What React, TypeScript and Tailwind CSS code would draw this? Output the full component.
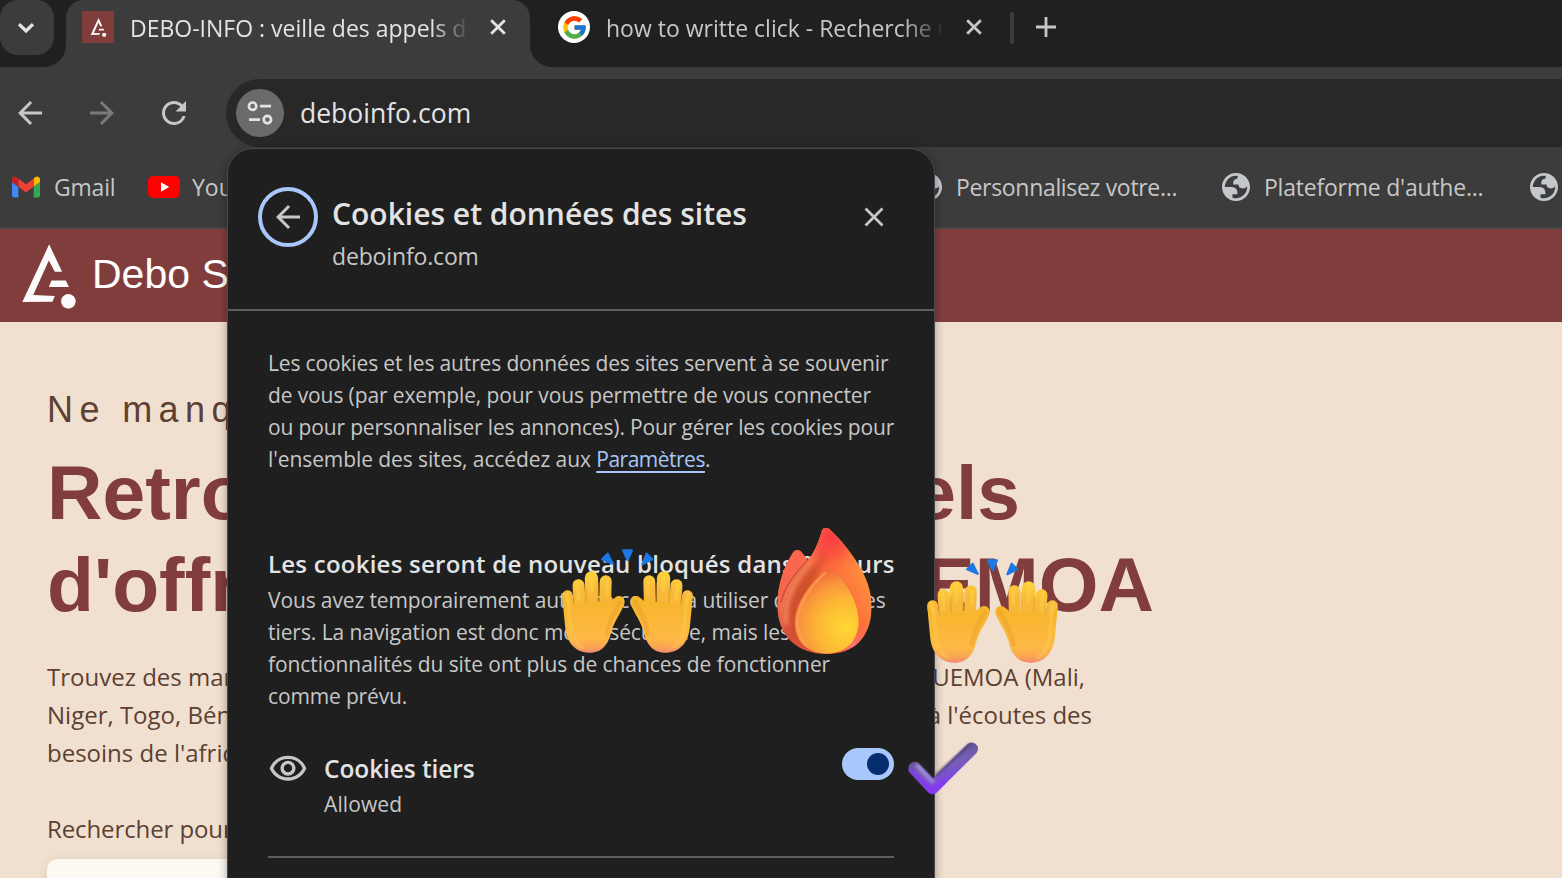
import React from "react";
import { MdArrowBack, MdArrowForward, MdRefresh, MdOutlineVisibility } from "react-icons/md";
import { FcGoogle } from "react-icons/fc";

function Cross({ className }: { className: string }) {
  return (
    <svg viewBox="0 0 16 16" className={className} fill="none" stroke="currentColor">
      <path d="M1.2 1.2 14.8 14.8M14.8 1.2 1.2 14.8" />
    </svg>
  );
}

function DeboLogo({ className }: { className: string }) {
  return (
    <svg viewBox="66 56 163 196" className={className} fill="#fcfafb">
      <path d="M148 57 187 140 165 140 147 106 100 210 165 213 158 230 67 231Z" />
      <path d="M155 166H198L208 186H147Z" />
      <circle cx="206" cy="229" r="22" />
    </svg>
  );
}

function GmailIcon() {
  return (
    <svg viewBox="52 42 88 66" className="h-[22px] w-7 shrink-0">
      <path fill="#4285f4" d="M58 108h14V74L52 59v43c0 3.32 2.69 6 6 6" />
      <path fill="#34a853" d="M120 108h14c3.32 0 6-2.69 6-6V59l-20 15" />
      <path fill="#fbbc04" d="M120 48v26l20-15v-8c0-7.42-8.47-11.65-14.4-7.2" />
      <path fill="#ea4335" d="M72 74V48l24 18 24-18v26L96 92" />
      <path fill="#c5221f" d="M52 51v8l20 15V48l-5.6-4.2c-5.94-4.45-14.4-.22-14.4 7.2" />
    </svg>
  );
}

function Globe() {
  return (
    <svg viewBox="2 2 20 20" className="size-7 shrink-0" fill="#c4c7cc" fillRule="evenodd">
      <path d="M12 2c5.52 0 10 4.48 10 10s-4.48 10-10 10S2 17.52 2 12 6.48 2 12 2zM4 12h4.4c3.407.022 4.922 1.73 4.543 5.127H9.488v2.47a8.004 8.004 0 0 0 10.498-8.083C19.327 12.504 18.332 13 17 13c-2.137 0-3.206-.916-3.206-2.75h-3.748c-.274-2.728.683-4.092 2.87-4.092 0-.975.327-1.597.811-1.973A8.004 8.004 0 0 0 4 12z" />
    </svg>
  );
}

function Hand({ id }: { id: string }) {
  const f = `url(#${id}-finger)`;
  return (
    <g strokeLinecap="round" fill="none">
      <path d="M197 183 194 290" stroke={f} strokeWidth="36" />
      <path d="M154 173 156 290" stroke={f} strokeWidth="40" />
      <path d="M115 195 122 290" stroke={f} strokeWidth="36" />
      <path d="M82 226 92 300" stroke={f} strokeWidth="32" />
      <path d="M176 188 174 252M136 202 139 252M99 232 104 262" stroke="#d9900f" strokeOpacity=".4" strokeWidth="4" />
      <path d="M80 222 84 262M112 192 116 236M154 170 155 212M202 184 200 222" stroke="#ffe24a" strokeOpacity=".3" strokeWidth="12" />
      <path d="M66 228 75 322C80 372 110 398 148 398 188 398 206 370 214 334 221 308 242 278 253 252 258 232 240 221 226 232 214 240 206 250 196 254L180 246C150 240 116 246 96 262Z" fill={`url(#${id}-palm)`} />
      <path d="M240 246C224 272 206 304 200 342" stroke="#e0912a" strokeOpacity=".28" strokeWidth="14" />
      <path d="M84 240 92 325C96 352 108 372 126 382" stroke="#ffd35a" strokeOpacity=".3" strokeWidth="12" />
    </g>
  );
}

function RaisedHands({ id, className }: { id: string; className: string }) {
  return (
    <svg viewBox="60 80 405 325" className={className}>
      <defs>
        <linearGradient id={`${id}-finger`} gradientUnits="userSpaceOnUse" x1="100" y1="152" x2="130" y2="300">
          <stop offset="0" stopColor="#ffd83a" />
          <stop offset=".45" stopColor="#f9b93c" />
          <stop offset="1" stopColor="#f5b32e" />
        </linearGradient>
        <linearGradient id={`${id}-palm`} gradientUnits="userSpaceOnUse" x1="150" y1="240" x2="150" y2="400">
          <stop offset="0" stopColor="#f7b52b" />
          <stop offset=".7" stopColor="#fdb944" />
          <stop offset=".88" stopColor="#faa552" />
          <stop offset="1" stopColor="#f08474" />
        </linearGradient>
      </defs>
      <Hand id={id} />
      <g transform="matrix(-1 0 0 1 525 0)">
        <Hand id={id} />
      </g>
      <g fill="#1b78e6" stroke="#1b78e6" strokeWidth="6" strokeLinejoin="round">
        <path d="M203 100 186 117 218 131Z" />
        <path d="M249 90H276L263 120Z" />
        <path d="M320 100 337 117 307 132Z" />
      </g>
    </svg>
  );
}

function Flame({ className }: { className: string }) {
  return (
    <svg viewBox="50 36 289 384" className={className}>
      <defs>
        <linearGradient id="flame-outer" gradientUnits="userSpaceOnUse" x1="90" y1="300" x2="310" y2="190">
          <stop offset="0" stopColor="#d8503a" />
          <stop offset=".35" stopColor="#d9532f" />
          <stop offset=".65" stopColor="#fb6a3c" />
          <stop offset="1" stopColor="#ff8a3c" />
        </linearGradient>
        <radialGradient id="flame-tip" gradientUnits="userSpaceOnUse" cx="212" cy="70" r="110">
          <stop offset="0" stopColor="#fb3a42" />
          <stop offset=".5" stopColor="#f94a40" stopOpacity=".7" />
          <stop offset="1" stopColor="#fb6a3c" stopOpacity="0" />
        </radialGradient>
        <radialGradient id="flame-inner" gradientUnits="userSpaceOnUse" cx="258" cy="338" r="180">
          <stop offset="0" stopColor="#ffd833" />
          <stop offset=".45" stopColor="#fdb835" />
          <stop offset=".75" stopColor="#f9963c" />
          <stop offset="1" stopColor="#f2683a" />
        </radialGradient>
        <linearGradient id="flame-side" gradientUnits="userSpaceOnUse" x1="100" y1="110" x2="90" y2="380">
          <stop offset="0" stopColor="#ff6450" />
          <stop offset=".6" stopColor="#ee6a4a" />
          <stop offset="1" stopColor="#cf4a3a" />
        </linearGradient>
        <radialGradient id="flame-pink" gradientUnits="userSpaceOnUse" cx="280" cy="395" r="60">
          <stop offset="0" stopColor="#ff7474" />
          <stop offset="1" stopColor="#ff7474" stopOpacity="0" />
        </radialGradient>
        <filter id="flame-soft" x="-50%" y="-50%" width="200%" height="200%">
          <feGaussianBlur stdDeviation="7" />
        </filter>
        <clipPath id="flame-clip">
          <path d="M187 46C190 37 202 36 209 42 240 70 270 108 291 140 320 185 336 225 336 278 334 370 280 417 200 417 110 417 54 360 53 270 53 205 78 145 101 111 108 102 121 103 127 113L144 136C162 118 178 80 187 46Z" />
        </clipPath>
      </defs>
      <g clipPath="url(#flame-clip)">
        <rect x="50" y="36" width="289" height="384" fill="url(#flame-outer)" />
        <path d="M50 90H140L146 136C110 180 60 250 70 330L110 400H50Z" fill="url(#flame-side)" />
        <path d="M185 60C178 110 130 160 100 215 82 250 74 290 80 330" fill="none" stroke="#f5895c" strokeWidth="20" strokeOpacity=".8" filter="url(#flame-soft)" />
        <path d="M146 134C112 168 76 210 64 262" fill="none" stroke="#c8452f" strokeWidth="5" strokeOpacity=".7" />
        <path d="M198 110C190 150 130 200 104 270 96 310 100 340 110 370" fill="none" stroke="#c9502a" strokeWidth="20" strokeOpacity=".75" filter="url(#flame-soft)" />
        <rect x="50" y="36" width="289" height="384" fill="url(#flame-tip)" />
        <rect x="50" y="36" width="289" height="384" fill="url(#flame-pink)" />
      </g>
      <path d="M200 163C206 158 214 158 221 165 262 205 297 262 297 322 294 385 252 416 202 416 148 416 106 385 105 322 107 260 158 198 200 163Z" fill="url(#flame-inner)" />
      <path d="M198 172C160 206 115 262 113 322 114 350 124 374 140 390" fill="none" stroke="#ffae62" strokeWidth="8" strokeOpacity=".5" />
    </svg>
  );
}

function CheckMark({ className }: { className: string }) {
  return (
    <svg viewBox="50 604 217 164" className={className} fill="none" strokeLinecap="round" strokeLinejoin="round">
      <defs>
        <linearGradient id="check-base" gradientUnits="userSpaceOnUse" x1="150" y1="620" x2="185" y2="735">
          <stop offset="0" stopColor="#5c4a86" />
          <stop offset=".45" stopColor="#7560b6" />
          <stop offset="1" stopColor="#8340ec" />
        </linearGradient>
        <filter id="check-soft" x="-30%" y="-30%" width="160%" height="160%">
          <feGaussianBlur stdDeviation="4" />
        </filter>
      </defs>
      <path d="M73 685 127 744 245 627" stroke="url(#check-base)" strokeWidth="38" />
      <path d="M62 692 125 756 160 726" stroke="#8636f2" strokeWidth="12" strokeOpacity=".8" filter="url(#check-soft)" />
      <path d="M82 678 126 724" stroke="#a08fd6" strokeWidth="14" strokeOpacity=".8" filter="url(#check-soft)" />
      <path d="M138 706 238 614" stroke="#56497c" strokeWidth="9" strokeOpacity=".8" filter="url(#check-soft)" />
    </svg>
  );
}

function TabStrip() {
  return (
    <div className="flex h-[67px] shrink-0 bg-[#1f2120]">
      <div className="flex w-11 shrink-0 items-start bg-[#1f2120]">
        <div className="flex h-[55px] w-[54px] shrink-0 items-center justify-center rounded-[18px] bg-[#3c3c3c] pr-0.5 text-[#e3e3e3]">
          <svg viewBox="0 0 16 12" className="h-3 w-4" fill="none" stroke="currentColor" strokeWidth="3.4">
            <path d="M1 2.2 8 9 15 2.2" />
          </svg>
        </div>
      </div>
      <svg viewBox="0 0 22 22" className="size-[22px] shrink-0 self-end" fill="#3c3c3c">
        <path d="M22 0A22 22 0 0 1 0 22H22Z" />
      </svg>
      <div className="flex h-[67px] w-[464px] shrink-0 rounded-t-[18px] bg-[#3c3c3c] pl-4">
        <div className="mt-[11px] flex size-8 items-center justify-center bg-[#813d3b]">
          <DeboLogo className="h-[19px] w-[17px]" />
        </div>
        <div className="mt-[13px] ml-4 w-[336px] overflow-hidden text-[23px] leading-[30px] whitespace-nowrap text-[#e3e3e3] [mask-image:linear-gradient(to_right,black_302px,transparent_340px)]">
          DEBO-INFO : veille des appels d&apos;offres
        </div>
        <Cross className="mt-[19px] ml-6 size-4 stroke-[2.8] text-[#e3e3e3]" />
      </div>
      <svg viewBox="0 0 22 22" className="size-[22px] shrink-0 self-end" fill="#3c3c3c">
        <path d="M0 0A22 22 0 0 0 22 22H0Z" />
      </svg>
      <div className="flex pl-1.5 text-[#c7c7c7]">
        <div className="mt-[11px] flex size-8 items-center justify-center rounded-full bg-white">
          <FcGoogle className="size-[27px]" />
        </div>
        <div className="mt-[13px] ml-4 w-[335px] overflow-hidden text-[23px] leading-[30px] whitespace-nowrap [mask-image:linear-gradient(to_right,black_296px,transparent_340px)]">
          how to writte click - Recherche Google
        </div>
        <Cross className="mt-[19px] ml-[25px] size-4 stroke-[2.8]" />
        <div className="mt-3 ml-7 h-8 w-1 rounded-full bg-[#3c3c3c]" />
        <svg viewBox="0 0 20 20" className="mt-[17px] ml-[22px] size-5" stroke="currentColor" strokeWidth="2.8">
          <path d="M10 0V20M0 10H20" />
        </svg>
      </div>
    </div>
  );
}

function Toolbar() {
  return (
    <div className="flex h-20 shrink-0 bg-[#3c3c3c] pt-3">
      <div className="flex h-[68px] w-[226px] shrink-0 items-center gap-9 pl-3 text-[#c7c7c7]">
        <MdArrowBack className="size-9" />
        <MdArrowForward className="size-9 text-[#7a7a7a]" />
        <MdRefresh className="size-9" />
      </div>
      <div className="flex h-[68px] grow items-center gap-4 rounded-l-full bg-[#282828] pl-2.5">
        <div className="flex size-12 items-center justify-center rounded-full bg-[#6a6a6a]">
          <svg viewBox="0 0 26 26" className="size-[26px]" fill="none" stroke="#e3e3e3" strokeWidth="2.7">
            <circle cx="5.6" cy="6.2" r="3.7" />
            <path d="M13 6.2H24M2 19.6H13" />
            <circle cx="20.4" cy="19.6" r="3.7" />
          </svg>
        </div>
        <div className="text-[26.5px] leading-9 text-[#e3e3e3]">deboinfo.com</div>
      </div>
    </div>
  );
}

function Bookmarks() {
  return (
    <div className="flex h-[82px] shrink-0 items-center overflow-hidden border-b-2 border-[#454746] bg-[#3c3c3c] pl-3 text-[23px] leading-[30px] whitespace-nowrap text-[#c7c7c7]">
      <div className="flex w-[136px] shrink-0 items-center gap-3.5">
        <GmailIcon />
        <span className="tracking-[-0.2px]">Gmail</span>
      </div>
      <div className="flex w-[766px] shrink-0 items-center gap-3">
        <svg viewBox="0 0 32 22" className="h-[22px] w-8">
          <rect width="32" height="22" rx="5" fill="#ff0000" />
          <path d="M13 6.2 21.2 11 13 15.8Z" fill="#fff" />
        </svg>
        <span>YouTube</span>
      </div>
      <div className="flex w-[308px] shrink-0 items-center gap-3.5">
        <Globe />
        <span className="tracking-[-0.32px]">Personnalisez votre...</span>
      </div>
      <div className="flex w-[308px] shrink-0 items-center gap-3.5">
        <Globe />
        <span className="tracking-[-0.22px]">Plateforme d&apos;authe...</span>
      </div>
      <Globe />
    </div>
  );
}

function Site() {
  return (
    <div className="min-h-0 grow overflow-hidden bg-[#f1e0cf] text-[#5c4033]">
      <div className="flex h-[93px] items-start bg-[#813d3b] pl-[22px]">
        <DeboLogo className="mt-[15px] h-[65px] w-[54px]" />
        <div className="mt-[22px] ml-4 font-['Liberation_Sans',sans-serif] text-[41px] leading-[46px] whitespace-nowrap text-white">
          Debo Services
        </div>
      </div>
      <div className="pt-16 pl-[47px]">
        <div className="font-['Liberation_Sans',sans-serif] text-[36px] leading-[48px] tracking-[6.4px] whitespace-nowrap">
          Ne manquez aucun appel
        </div>
        <h1 className="mt-3 font-['Liberation_Sans',sans-serif] text-[76.8px] leading-[92px] font-bold whitespace-nowrap text-[#813d3b]">
          <div className="flex w-[973px] justify-between">
            <span>Retrouvez tous les</span>
            <span>appels</span>
          </div>
          <div className="flex w-[1107px] justify-between">
            <span>d&apos;offres dans la zone</span>
            <span>UEMOA</span>
          </div>
        </h1>
        <div className="mt-7 w-[1045px] text-[24px] leading-[38px] whitespace-nowrap">
          <div className="flex w-[1038px] justify-between">
            <span>Trouvez des marchés publics et privés</span>
            <span>UEMOA (Mali,</span>
          </div>
          <div className="flex justify-between">
            <span>Niger, Togo, Bénin, Sénégal)</span>
            <span>à l&apos;écoutes des</span>
          </div>
          <div>besoins de l&apos;afrique de l&apos;ouest</div>
        </div>
        <div className="mt-[38px] text-[24px] leading-[38px] tracking-[-0.1px]">Rechercher pour commencer</div>
        <div className="mt-[11px] h-20 w-[720px] rounded-[10px] bg-[#fcf8f2] shadow-[0_2px_10px_rgba(120,80,50,0.15)]" />
      </div>
    </div>
  );
}

function CookiePanel() {
  return (
    <div className="absolute top-[148px] left-[227px] h-[760px] w-[708px] rounded-t-[26px] border border-[#4b484f] bg-[#1f1f1f] text-[21px] leading-8 text-[#c7c7c7] shadow-[0_2px_10px_rgba(0,0,0,0.35)]">
      <div className="flex h-[162px] items-start border-b-2 border-[#5e5e5e] pt-[38px] pl-[30px]">
        <div className="flex size-[60px] items-center justify-center rounded-full border-4 border-[#a8c7fa]">
          <MdArrowBack className="size-9" />
        </div>
        <div className="mt-[7px] ml-3.5 w-[532px]">
          <div className="text-[30px] leading-10 font-semibold text-[#e3e3e3]">Cookies et données des sites</div>
          <div className="mt-1.5 text-[23px] tracking-[-0.15px]">deboinfo.com</div>
        </div>
        <Cross className="mt-5 size-5 stroke-[2.2]" />
      </div>
      <div className="px-10 pt-9 whitespace-nowrap">
        <div className="leading-[32.15px]">
          <div className="tracking-[-0.15px]">Les cookies et les autres données des sites servent à se souvenir</div>
          <div className="tracking-[-0.12px]">de vous (par exemple, pour vous permettre de vous connecter</div>
          <div className="tracking-[-0.15px]">ou pour personnaliser les annonces). Pour gérer les cookies pour</div>
          <div className="tracking-[-0.09px]">
            l&apos;ensemble des sites, accédez aux <span className="tracking-[-0.5px] text-[#a8c7fa] underline decoration-2 underline-offset-4">Paramètres</span>.
          </div>
        </div>
        <div className="mt-[71.4px] text-[24px] leading-[34px] font-semibold tracking-[0.24px] text-[#e3e3e3]">
          Les cookies seront de nouveau bloqués dans 90 jours
        </div>
        <div className="mt-[3px] tracking-[-0.07px]">
          <div className="tracking-[-0.13px]">Vous avez temporairement autorisé ce site à utiliser des cookies</div>
          <div>tiers. La navigation est donc moins sécurisée, mais les</div>
          <div>fonctionnalités du site ont plus de chances de fonctionner</div>
          <div className="tracking-[-0.15px]">comme prévu.</div>
        </div>
        <div className="mt-9 flex h-[110px] items-start border-b-2 border-[#5e5e5e]">
          <MdOutlineVisibility className="mt-px size-10 shrink-0" />
          <div className="mt-1 ml-4 grow">
            <div className="text-[24.5px] leading-[34px] font-semibold tracking-[-0.1px] text-[#e3e3e3]">Cookies tiers</div>
            <div className="mt-[2px] tracking-[0.1px]">Allowed</div>
          </div>
          <div className="flex h-8 w-[52px] items-center justify-end rounded-full bg-[#a8c7fa] pr-[5px]">
            <div className="size-[22px] rounded-full bg-[#062e6f]" />
          </div>
        </div>
      </div>
    </div>
  );
}

export default function App() {
  return (
    <div className="relative flex h-[878px] w-[1562px] flex-col overflow-hidden font-['Open_Sans',sans-serif]">
      <TabStrip />
      <Toolbar />
      <Bookmarks />
      <Site />
      <CookiePanel />
      <RaisedHands id="hands-a" className="absolute top-[546.5px] left-[560px] h-[108px] w-[135px]" />
      <Flame className="absolute top-[527px] left-[776px] h-[128px] w-[97px]" />
      <RaisedHands id="hands-b" className="absolute top-[556.5px] left-[924.5px] h-[108px] w-[135px]" />
      <CheckMark className="absolute top-[741px] left-[907px] h-[55px] w-[72px]" />
    </div>
  );
}
